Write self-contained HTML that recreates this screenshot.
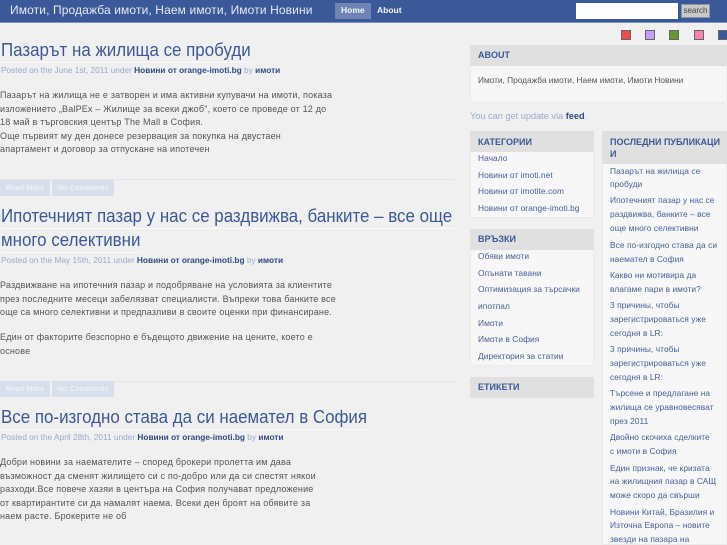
<!DOCTYPE html>
<html><head><meta charset="utf-8">
<style>
html,body{margin:0;padding:0;width:727px;height:545px;overflow:hidden;background:#f0f0f0}
body{font-family:"Liberation Sans","DejaVu Sans",sans-serif;position:relative}
#w{position:absolute;left:0;top:0;width:727px;height:545px;overflow:hidden;filter:blur(.25px)}
#w div{position:absolute}
.l{white-space:nowrap;line-height:14px}
.b{font-size:9px;color:#555;letter-spacing:.19px;left:0}
.t{font-size:18px;color:#3b5998;line-height:26px;white-space:nowrap;left:1px;transform:scaleX(.94);transform-origin:0 0}
.u{left:1px;height:1px;background:#fafafa}
.m{font-size:8.3px;color:#9aa9cc;left:1px;white-space:nowrap;line-height:14px;letter-spacing:0}
.m b{color:#2f4a85;letter-spacing:0}
.s{font-size:8.4px;color:#46609a;white-space:nowrap;line-height:14px;letter-spacing:.05px}
.h{font-size:9px;font-weight:bold;color:#3b5998;white-space:nowrap;line-height:14px;letter-spacing:0}
.bx{background:#f7f7f7;border:1px solid #ebebeb;box-sizing:border-box}
.hd{background:#e0e0e0}
.btn{background:#d6dfeb;height:16px;top:0;color:#eef1f6;font-size:7.6px;font-weight:bold;line-height:15px;text-align:center;white-space:nowrap}
.c{width:10px;height:10px;top:30px;border:1px solid #666;box-sizing:border-box}
.hr{left:0;width:455px;height:1px;background:#e2e5ee}
</style></head><body><div id="w">
<div style="left:0;top:0;width:727px;height:22px;background:#3b5998"></div>
<div style="left:0;top:22px;width:727px;height:1px;background:#7f93bc"></div>
<div class="l" style="left:10px;top:3px;font-size:12px;color:#e6eaf2;line-height:15px;letter-spacing:.12px">Имоти, Продажба имоти, Наем имоти, Имоти Новини</div>
<div style="left:335px;top:3px;width:36px;height:16px;background:#6d84b4"></div>
<div class="l" style="left:341px;top:3px;font-size:8.5px;font-weight:bold;color:#f2f4f8">Home</div>
<div class="l" style="left:377px;top:3px;font-size:8.5px;font-weight:bold;color:#f2f4f8">About</div>
<div style="left:576px;top:3px;width:102px;height:16px;background:#fff"></div>
<div style="left:681px;top:4px;width:29px;height:14px;background:#c9c9c9;border:1px solid #8a94a8;box-sizing:border-box;font-size:8px;color:#444;text-align:center;line-height:12px">search</div>
<div class="c" style="left:621px;background:#ee4c4c"></div>
<div class="c" style="left:645px;background:#c79bff"></div>
<div class="c" style="left:669px;background:#639a2c"></div>
<div class="c" style="left:694px;background:#f583b0"></div>
<div class="c" style="left:718px;background:#3b5998"></div>

<!-- post 1 -->
<div class="t" style="top:37px">Пазарът на жилища се пробуди</div>
<div class="u" style="top:62px;width:253px"></div>
<div class="m" style="top:63px">Posted on the June 1st, 2011 under <b>Новини от orange-imoti.bg</b> by <b>имоти</b></div>
<div class="l b" style="top:88px">Пазарът на жилища не е затворен и има активни купувачи на имоти, показа</div>
<div class="l b" style="top:102px">изложението „BalPEx – Жилище за всеки джоб", което се проведе от 12 до</div>
<div class="l b" style="top:115px">18 май в търговския център The Mall в София.</div>
<div class="l b" style="top:129px">Още първият му ден донесе резервация за покупка на двустаен</div>
<div class="l b" style="top:142px">апартамент и договор за отпускане на ипотечен</div>
<div class="hr" style="top:179px"></div>
<div class="btn" style="left:0;top:180px;width:50px">Read More</div>
<div class="btn" style="left:52px;top:180px;width:62px">No Comments</div>

<!-- post 2 -->
<div class="t" style="top:203px">Ипотечният пазар у нас се раздвижва, банките – все още</div>
<div class="u" style="top:228px;width:454px"></div>
<div class="t" style="top:227px">много селективни</div>
<div class="u" style="top:252px;width:140px"></div>
<div class="m" style="top:253px">Posted on the May 15th, 2011 under <b>Новини от orange-imoti.bg</b> by <b>имоти</b></div>
<div class="l b" style="top:278px">Раздвижване на ипотечния пазар и подобряване на условията за клиентите</div>
<div class="l b" style="top:292px">през последните месеци забелязват специалисти. Въпреки това банките все</div>
<div class="l b" style="top:305px">още са много селективни и предпазливи в своите оценки при финансиране.</div>
<div class="l b" style="top:330px">Един от факторите безспорно е бъдещото движение на цените, което е</div>
<div class="l b" style="top:344px">основе</div>
<div class="hr" style="top:381px"></div>
<div class="btn" style="left:0;top:381px;width:50px">Read More</div>
<div class="btn" style="left:52px;top:381px;width:62px">No Comments</div>

<!-- post 3 -->
<div class="t" style="top:404px">Все по-изгодно става да си наемател в София</div>
<div class="u" style="top:429px;width:366px"></div>
<div class="m" style="top:430px">Posted on the April 28th, 2011 under <b>Новини от orange-imoti.bg</b> by <b>имоти</b></div>
<div class="l b" style="top:455px">Добри новини за наемателите – според брокери пролетта им дава</div>
<div class="l b" style="top:469px">възможност да сменят жилището си с по-добро или да си спестят някои</div>
<div class="l b" style="top:482px">разходи.Все повече хазяи в центъра на София получават предложение</div>
<div class="l b" style="top:496px">от квартирантите си да намалят наема. Всеки ден броят на обявите за</div>
<div class="l b" style="top:509px">наем расте. Брокерите не об</div>

<!-- about -->
<div class="bx" style="left:470px;top:45px;width:257px;height:58px"></div>
<div class="hd" style="left:470px;top:45px;width:257px;height:21px"></div>
<div class="h" style="left:478px;top:48px">ABOUT</div>
<div class="s" style="left:478px;top:73px;color:#555;font-size:8.3px;letter-spacing:0">Имоти, Продажба имоти, Наем имоти, Имоти Новини</div>
<div class="l" style="left:470px;top:109px;font-size:9.2px;color:#9aa9cc">You can get update via <b style="color:#2f4a85">feed</b>.</div>

<!-- categories -->
<div class="bx" style="left:470px;top:131px;width:124px;height:87px"></div>
<div class="hd" style="left:470px;top:131px;width:124px;height:21px"></div>
<div class="h" style="left:478px;top:135px">КАТЕГОРИИ</div>
<div class="s" style="left:478px;top:151px">Начало</div>
<div class="s" style="left:478px;top:168px">Новини от imoti.net</div>
<div class="s" style="left:478px;top:184px">Новини от imotite.com</div>
<div class="s" style="left:478px;top:201px">Новини от orange-imoti.bg</div>

<!-- links -->
<div class="bx" style="left:470px;top:229px;width:124px;height:137px"></div>
<div class="hd" style="left:470px;top:229px;width:124px;height:21px"></div>
<div class="h" style="left:478px;top:232px">ВРЪЗКИ</div>
<div class="s" style="left:478px;top:249px">Обяви имоти</div>
<div class="s" style="left:478px;top:266px">Опънати тавани</div>
<div class="s" style="left:478px;top:282px">Оптимизация за търсачки</div>
<div class="s" style="left:478px;top:299px">ипотпал</div>
<div class="s" style="left:478px;top:316px">Имоти</div>
<div class="s" style="left:478px;top:332px">Имоти в София</div>
<div class="s" style="left:478px;top:349px">Директория за статии</div>

<!-- tags -->
<div class="hd" style="left:470px;top:377px;width:124px;height:21px"></div>
<div class="h" style="left:478px;top:380px">ЕТИКЕТИ</div>

<!-- latest -->
<div class="bx" style="left:602px;top:131px;width:125px;height:414px"></div>
<div class="hd" style="left:602px;top:131px;width:125px;height:33px"></div>
<div class="h" style="left:610px;top:135px">ПОСЛЕДНИ ПУБЛИКАЦИ</div>
<div class="h" style="left:610px;top:147px">И</div>
<div class="s" style="left:610px;top:164px">Пазарът на жилища се</div>
<div class="s" style="left:610px;top:177px">пробуди</div>
<div class="s" style="left:610px;top:193px">Ипотечният пазар у нас се</div>
<div class="s" style="left:610px;top:207px">раздвижва, банките – все</div>
<div class="s" style="left:610px;top:221px">още много селективни</div>
<div class="s" style="left:610px;top:238px">Все по-изгодно става да си</div>
<div class="s" style="left:610px;top:252px">наемател в София</div>
<div class="s" style="left:610px;top:268px">Какво ни мотивира да</div>
<div class="s" style="left:610px;top:282px">влагаме пари в имоти?</div>
<div class="s" style="left:610px;top:298px">3 причины, чтобы</div>
<div class="s" style="left:610px;top:312px">зарегистрироваться уже</div>
<div class="s" style="left:610px;top:326px">сегодня в LR:</div>
<div class="s" style="left:610px;top:342px">3 причины, чтобы</div>
<div class="s" style="left:610px;top:356px">зарегистрироваться уже</div>
<div class="s" style="left:610px;top:370px">сегодня в LR:</div>
<div class="s" style="left:610px;top:386px">Търсене и предлагане на</div>
<div class="s" style="left:610px;top:400px">жилища се уравновесяват</div>
<div class="s" style="left:610px;top:414px">през 2011</div>
<div class="s" style="left:610px;top:430px">Двойно скочиха сделките</div>
<div class="s" style="left:610px;top:444px">с имоти в София</div>
<div class="s" style="left:610px;top:461px">Един признак, че кризата</div>
<div class="s" style="left:610px;top:474px">на жилищния пазар в САЩ</div>
<div class="s" style="left:610px;top:488px">може скоро да свърши</div>
<div class="s" style="left:610px;top:505px">Новини Китай, Бразилия и</div>
<div class="s" style="left:610px;top:518px">Източна Европа – новите</div>
<div class="s" style="left:610px;top:532px">звезди на пазара на</div>
</div></body></html>
